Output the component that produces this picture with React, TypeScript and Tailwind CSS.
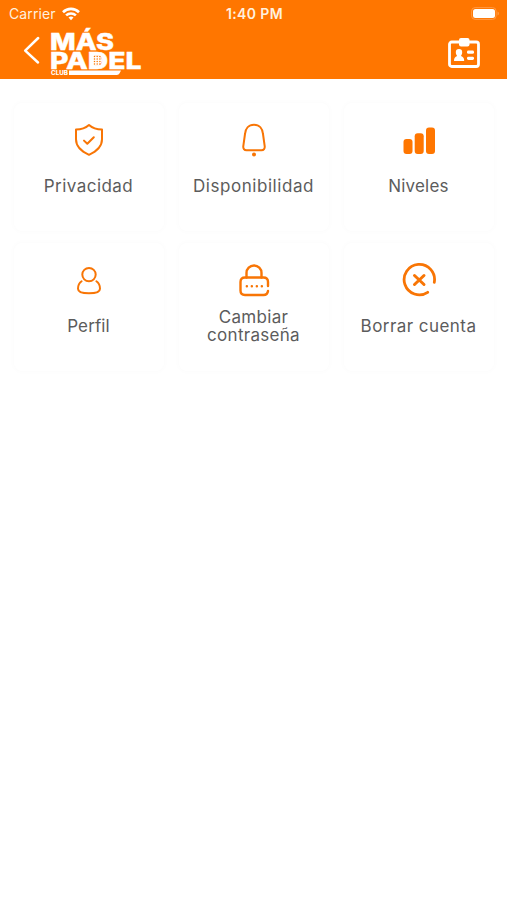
import React from 'react';

interface MenuCardProps {
  lines: string[];
  textClass: string;
  children: React.ReactNode;
}

const MenuCard: React.FC<MenuCardProps> = ({ lines, textClass, children }) => {
  return (
    <button className="flex h-[128px] flex-col items-center rounded-lg bg-white pt-[19px] shadow-[0_0_6px_rgba(0,0,0,0.025)]">
      <svg
        viewBox="0 0 36 36"
        className="size-9 shrink-0"
        fill="none"
        stroke="#f87505"
        strokeWidth="2"
        strokeLinecap="round"
        strokeLinejoin="round"
      >
        {children}
      </svg>
      <span className="flex h-[57px] flex-col items-center justify-center text-[17px] leading-[17.5px] text-[#5c5c5c]">
        {lines.map((line) => (
          <span key={line} className={`whitespace-nowrap ${textClass}`}>
            {line}
          </span>
        ))}
      </span>
    </button>
  );
};

const StatusBar: React.FC = () => {
  return (
    <div className="grid h-[27px] grid-cols-3 items-center pl-[9px] pr-[7px] text-[#fff0df]">
      <div className="flex items-center gap-[6px]">
        <span className="text-[14px] tracking-[0.12px]">Carrier</span>
        <svg viewBox="0 0 18 14" className="h-[14px] w-[18px]" fill="none" stroke="#fff" strokeWidth="2.6">
          <path d="M1 5.2C5.5.8 12.5.8 17 5.2" />
          <path d="M4.1 8.4c2.8-2.6 7-2.6 9.8 0" />
          <path d="M6.5 10.5c1.5-1.2 3.5-1.2 5 0L9 13.2Z" fill="#fff" stroke="none" />
        </svg>
      </div>
      <span className="text-center text-[14px] font-semibold tracking-[0.4px]">1:40 PM</span>
      <svg viewBox="0 0 29 13" className="h-[13px] w-[29px] justify-self-end">
        <rect x=".6" y=".6" width="24.5" height="11.8" rx="3.5" fill="none" stroke="#ff9a45" />
        <rect x="2" y="2" width="22" height="9" rx="2.5" fill="#fff" />
        <path d="M26.5 4.5v4c2-.8 2-3.2 0-4Z" fill="#ff9a45" />
      </svg>
    </div>
  );
};

const Logo: React.FC = () => {
  return (
    <svg viewBox="0 0 92 50" className="mb-[2px] ml-[9px] h-[50px] w-[92px]" fill="#fff">
      <g fontFamily="Inter, sans-serif" fontWeight="800" stroke="#fff" strokeWidth=".4">
        <text x="0" y="24.2" fontSize="23" textLength="64" lengthAdjust="spacingAndGlyphs">
          MÁS
        </text>
        <text x="0" y="42.8" fontSize="23" textLength="91.500" lengthAdjust="spacingAndGlyphs">
          PADEL
        </text>
      </g>
      <text x="1" y="48.7" fontFamily="Inter, sans-serif" fontWeight="800" fontSize="5.5" textLength="17" lengthAdjust="spacingAndGlyphs">
        CLUB
      </text>
      <path d="M19 44.500h52l-1.400 2.800q-.8 1.700-2.700 1.700H19Z" />
      {/* racket holes inside the D */}
      <path d="M43.500 29.500h4.500q4 2 4 4.800t-4 5.500h-4.500Z" />
      <g fill="#fb7600">
        {[30.5, 33, 35.5, 38].map((y) => (
          <React.Fragment key={y}>
            <circle cx="44.5" cy={y} r=".75" />
            <circle cx="47.2" cy={y} r=".75" />
            <circle cx="49.9" cy={y} r=".75" />
          </React.Fragment>
        ))}
      </g>
    </svg>
  );
};

const Header: React.FC = () => {
  return (
    <header className="h-[79px] bg-[#ff7600]">
      <StatusBar />
      <div className="flex h-[50px] items-center pl-[23px] pr-[27px]">
        <svg viewBox="0 0 18 30" className="mb-[4px] h-[30px] w-[18px]" fill="none" stroke="#fff" strokeWidth="2.5" strokeLinecap="round">
          <path d="M15.200 3 2.200 15.600 15 27.500" strokeLinejoin="round" />
        </svg>
        <Logo />
        <svg viewBox="0 0 32 30" className="ml-auto mt-[2px] h-[30px] w-8" fill="#fff">
          <rect x="1.500" y="4" width="29" height="24.500" rx="2.200" fill="none" stroke="#fff" strokeWidth="2.800" />
          <path d="M11 2q0-2 2-2h6.500q2 0 2 2v4.500q0 2-2 2H13q-2 0-2-2Z" />
          <path d="M11 11a3.200 3.200 0 0 1 3.200 3.200c0 1.800-.8 2.700-1.200 3.800 2.200.8 3.200 2 3.200 5H6c0-3 1-4.200 3.100-5-.5-1.100-1.300-2-1.300-3.800A3.200 3.200 0 0 1 11 11Z" />
          <rect x="19" y="12.600" width="7" height="3.200" rx="1.400" />
          <rect x="19" y="18.700" width="7" height="3.200" rx="1.400" />
        </svg>
      </div>
    </header>
  );
};

const App: React.FC = () => {
  return (
    <div className="min-h-screen bg-white font-['Inter',sans-serif]">
      <Header />
      <main className="grid grid-cols-3 gap-x-[15px] gap-y-[12px] px-[13.500px] pt-6">
        <MenuCard lines={['Privacidad']} textClass="tracking-[0.450px]">
          <path d="M18 3c3.500 3.200 8 4.500 13 4.500v9.800c0 7.400-5.500 12.200-13 15.500C10.500 29.500 5 24.700 5 17.300V7.500C10 7.500 14.500 6.200 18 3Z" />
          <path d="m13 18.600 3.300 3.200 6.500-6.500" />
        </MenuCard>
        <MenuCard lines={['Disponibilidad']} textClass="tracking-[0.550px]">
          <path d="M18 2.800c5.500 0 8.600 4.200 9 9.200l1.700 12.100c.3 2.500-.9 4.200-3.200 4.200h-15c-2.300 0-3.500-1.700-3.200-4.200L9 12c.4-5 3.500-9.200 9-9.200Z" />
          <circle cx="18" cy="32.600" r="1.300" fill="#f87505" strokeWidth="1.400" />
        </MenuCard>
        <MenuCard lines={['Niveles']} textClass="tracking-[0.2px]">
          <g fill="#ff7600" stroke="none">
            <rect x="2.500" y="17" width="9" height="15" rx="3" />
            <rect x="13.700" y="11.300" width="9" height="20.700" rx="3" />
            <rect x="25" y="5.500" width="9" height="26.500" rx="3" />
          </g>
        </MenuCard>
        <MenuCard lines={['Perfil']} textClass="tracking-[0.1px]">
          <circle cx="18" cy="12.600" r="6.700" />
          <path d="M10.600 19.300C8 21.100 7 24.200 7 26.800c0 3.300 4 4.500 11 4.500s11-1.200 11-4.500c0-2.600-1-5.700-3.600-7.500" />
        </MenuCard>
        <MenuCard lines={['Cambiar', 'contraseña']} textClass="tracking-[0.3px]">
          <path d="M10.500 15.500V11a7.500 7.500 0 0 1 15 0V15.500" strokeWidth="2.400" />
          <path d="M32 24V20q0-4.500-4.500-4.500H9Q4.500 15.500 4.500 20v8.500q0 4.500 4.500 4.500H27.500q4 0 4.500-4" strokeWidth="2.400" />
          <path d="M10.800 24.300h.1M15.800 24.300h.1M20.800 24.300h.1M25.800 24.300h.1" strokeWidth="2.400" />
        </MenuCard>
        <MenuCard lines={['Borrar cuenta']} textClass="tracking-[0.450px]">
          <path d="M33.300 20.300A15.200 15.200 0 1 0 26.700 30.300" strokeWidth="2.800" />
          <path d="m13.500 13.500 9.500 9M23 13.500l-9.500 9" strokeWidth="3" />
        </MenuCard>
      </main>
    </div>
  );
};

export default App;
